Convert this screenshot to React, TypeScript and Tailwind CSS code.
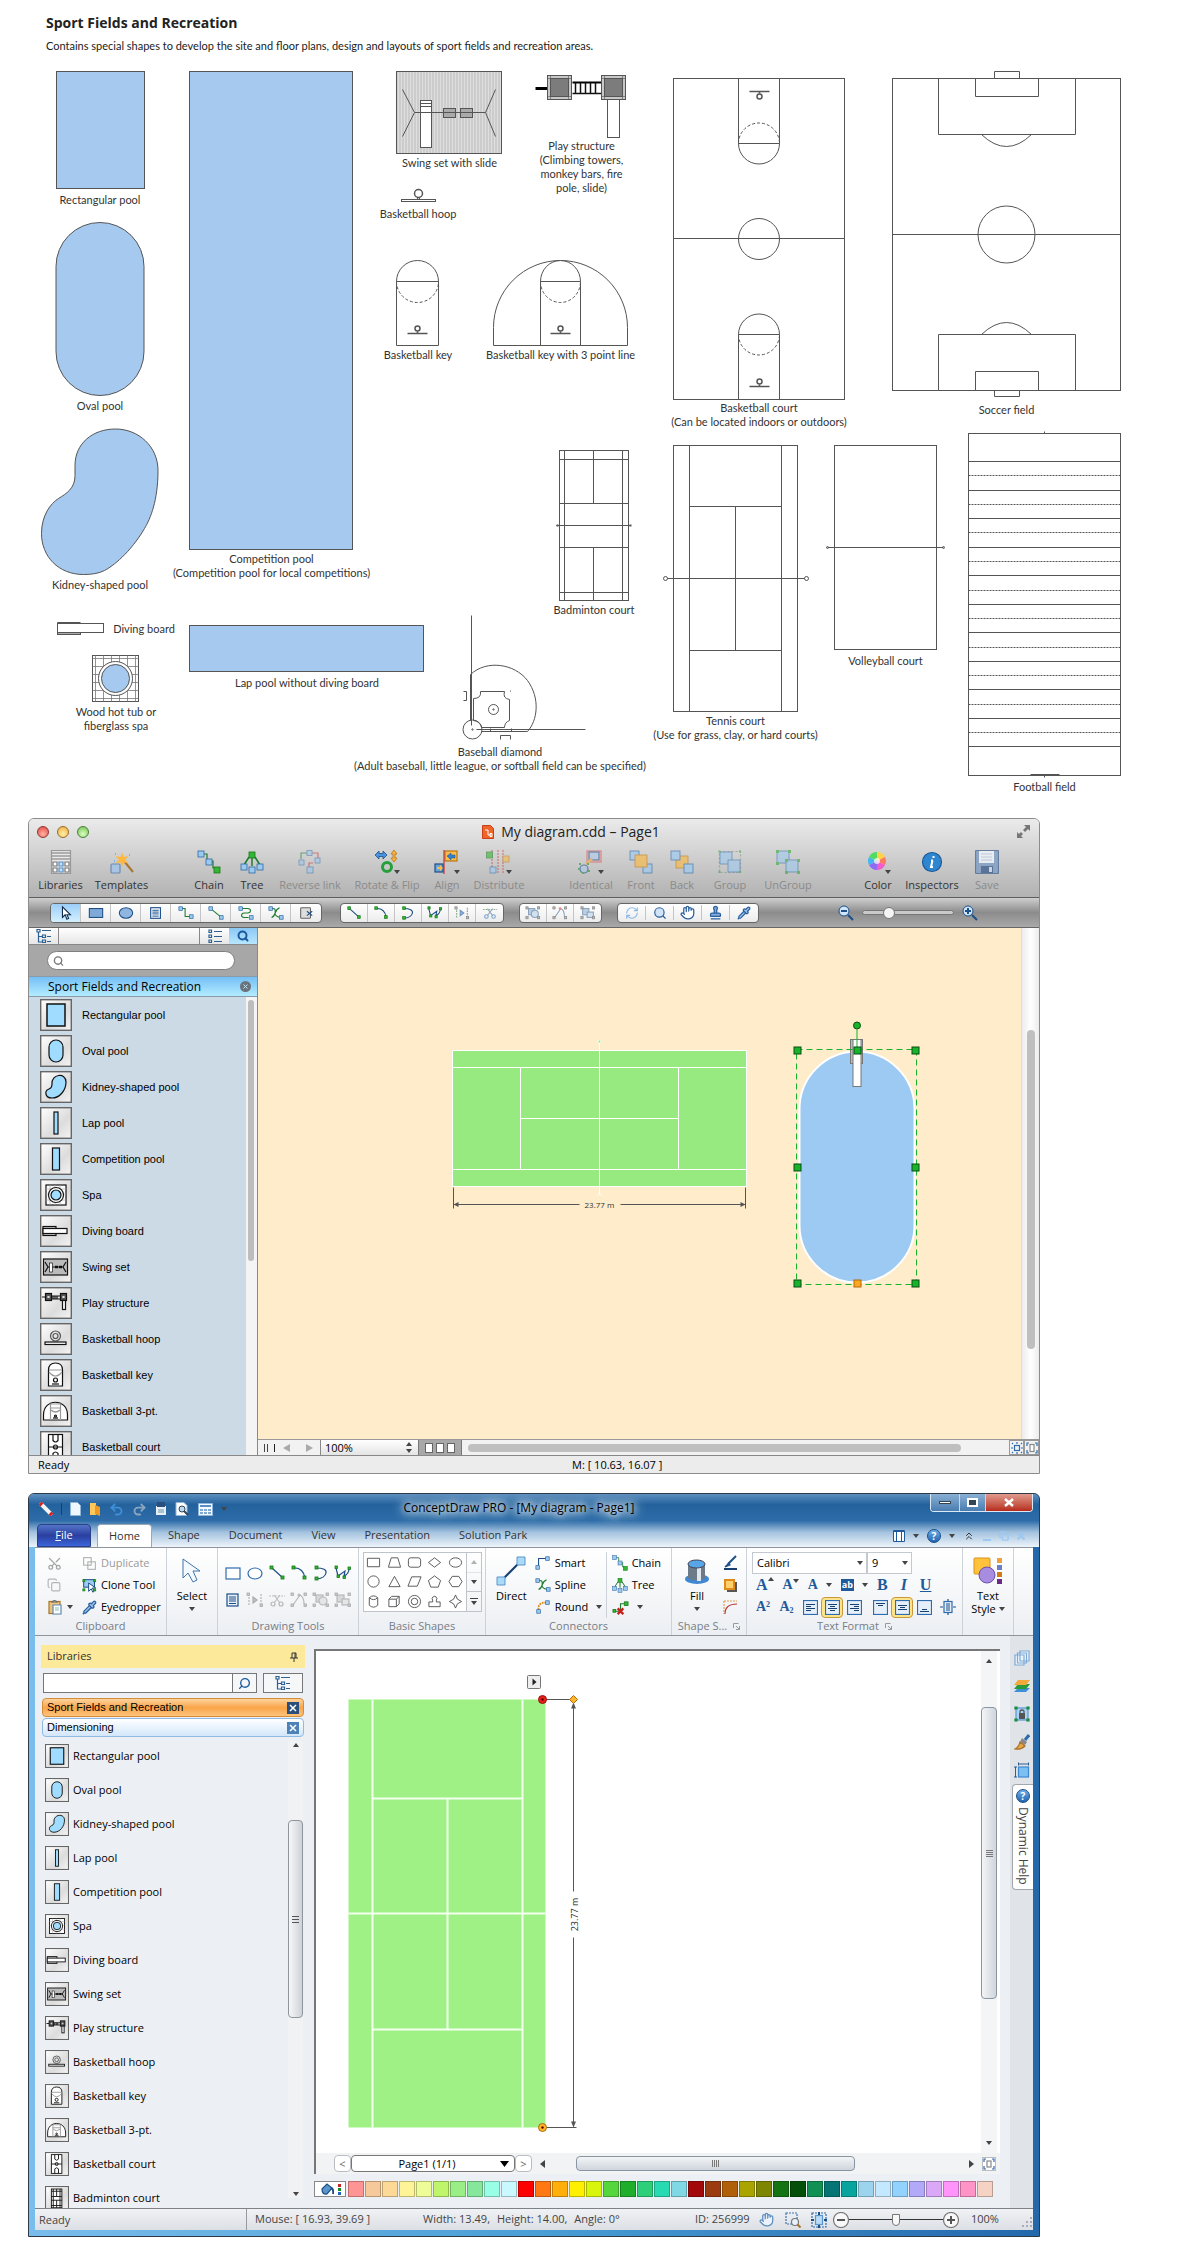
import { useState } from "react";
import type { ReactNode } from "react";
import {
  ChevronsUp,
  Copy,
  Hand,
  Pipette,
  Redo2,
  RefreshCw,
  Scissors,
  Search,
  Stamp,
  Undo2,
} from "lucide-react";

const POOL = "#a6c9ef";
const INK = "#555555";

/* ---------- shape sheet ---------- */

type DrawingProps = { x: number; y: number; w: number; h: number; children: ReactNode };

// Every drawing keeps the sheet's coordinates; half a pixel keeps the lines sharp.
function Drawing({ x, y, w, h, children }: DrawingProps) {
  return (
    <svg
      width={w}
      height={h}
      viewBox={`${x - 0.5} ${y - 0.5} ${w} ${h}`}
      fill="none"
      stroke={INK}
      className="block shrink-0 overflow-visible"
      aria-hidden="true"
    >
      {children}
    </svg>
  );
}

// The caption may be wider than its drawing, so it takes no width of its own.
function Figure({ caption, className, ...drawing }: DrawingProps & { caption: string[]; className?: string }) {
  return (
    <figure className={`flex flex-col items-center ${className ?? ""}`}>
      <Drawing {...drawing} />
      <figcaption className="flex w-0 flex-col items-center text-[11px] leading-[14px] whitespace-nowrap text-[#333]">
        {caption.map((line) => (
          <span key={line}>{line}</span>
        ))}
      </figcaption>
    </figure>
  );
}

function Hoop({ x, y, flip }: { x: number; y: number; flip?: boolean }) {
  const d = flip ? -1 : 1;
  return (
    <g>
      <circle cx={x} cy={y - 5 * d} r="2.5" strokeWidth="1.5" />
      <path d={`M${x} ${y - 2 * d}V${y}M${x - 10} ${y}h20`} strokeWidth="1.5" />
    </g>
  );
}

function Tower({ x }: { x: number }) {
  return (
    <g>
      <rect x={x} y="75" width="24" height="24" fill="#c8c8c8" />
      <rect x={x + 3} y="78" width="18" height="18" fill="#7c7c7c" />
      <path d={`M${x + 3} 75v24M${x + 21} 75v24M${x} 78h24M${x} 96h24`} strokeWidth="0.6" />
    </g>
  );
}

const solidYards = [461, 490, 518, 547, 575, 604, 632, 661, 689, 718, 746];
const dashedYards = [475, 504, 532, 561, 590, 618, 647, 675, 704, 732];

function ShapeSheet() {
  return (
    <section className="font-['Lato','Open_Sans',sans-serif]">
      <header className="pt-3 pl-4">
        <h1 className="font-['Open_Sans',sans-serif] text-sm leading-[22px] font-bold text-[#222]">Sport Fields and Recreation</h1>
        <p className="text-[11px] leading-6 text-[#222]">
          Contains special shapes to develop the site and floor plans, design and layouts of sport fields and recreation areas.
        </p>
      </header>

      <div className="mt-[13px] flex items-start">
        <div className="flex w-[140px] shrink-0 flex-col items-center">
          <Figure caption={["Rectangular pool"]} x={54} y={71} w={91} h={122}>
            <rect x="55" y="71" width="88" height="117" fill={POOL} />
          </Figure>
          <Figure className="mt-[15px]" caption={["Oval pool"]} x={54} y={222} w={91} h={177}>
            <rect x="54.5" y="222" width="88" height="173" rx="44" fill={POOL} />
          </Figure>
          <Figure className="mt-[15px]" caption={["Kidney-shaped pool"]} x={41} y={428} w={118} h={150}>
            <path
              d="M74.5 465C74.5 443 92 428.5 115 428.5C138 428.5 157.5 446 157.5 470C157.5 500 150 518 144 528C130 552 112 566 104 570C98 573 91 574 83 574C58 574 41 556 41 533C41 515 50 503 58 498C66 493 74.5 488 74.5 475Z"
              fill={POOL}
            />
          </Figure>
          <div className="flex flex-col items-center gap-[19px] pt-[29px] pl-8">
            <figure className="flex items-center gap-2">
              <Drawing x={57} y={621} w={48} h={15}>
                <path d="M57 622h23M57 622v12h23" />
                <rect x="57" y="632" width="23" height="2" fill="#aaa" />
                <rect x="57" y="623" width="46" height="9" fill="#fff" />
              </Drawing>
              <figcaption className="text-[11px] leading-[14px] whitespace-nowrap text-[#333]">Diving board</figcaption>
            </figure>
            <Figure caption={["Wood hot tub or", "fiberglass spa"]} x={94} y={655} w={48} h={50}>
              <rect x="94" y="655" width="46" height="46" />
              <path
                d="M97 655v46M105 655v46M113 655v46M121 655v46M129 655v46M137 655v46M94 658h46M94 666h46M94 674h46M94 682h46M94 690h46M94 698h46"
                stroke="#777"
                strokeWidth="0.8"
              />
              <circle cx="117" cy="678" r="17" fill="#fff" />
              <circle cx="117" cy="678" r="14" fill={POOL} />
            </Figure>
          </div>
        </div>

        <div className="ml-[19px] shrink-0">
          <div className="flex gap-[42px]">
            <Figure caption={["Competition pool", "(Competition pool for local competitions)"]} x={189} y={71} w={165} h={481}>
              <rect x="189" y="71" width="163" height="478" fill={POOL} />
            </Figure>
            <div className="flex w-[234px] flex-col">
              <div className="flex items-start gap-8">
                <div className="flex flex-col items-start">
                  <Figure caption={["Swing set with slide"]} x={396} y={71} w={107} h={85}>
                    <defs>
                      <pattern id="sand" width="3" height="2" patternUnits="userSpaceOnUse">
                        <path d="M0 0.5h1M1.5 1.5h1" stroke="#777" />
                      </pattern>
                    </defs>
                    <rect x="396" y="71" width="105" height="82" fill="url(#sand)" />
                    <path d="M402 89L414 112L402 136M495 89L485 112L495 136" />
                    <rect x="420" y="100" width="11" height="47" fill="#fff" />
                    <path d="M420 103h11M420 106h11" />
                    <rect x="443" y="108" width="12" height="9" fill="#aaa" />
                    <rect x="460" y="108" width="12" height="9" fill="#aaa" />
                    <path d="M414 112h71" />
                  </Figure>
                  <Figure className="mt-[17px] ml-1" caption={["Basketball hoop"]} x={399} y={187} w={36} h={20}>
                    <circle cx="417" cy="193" r="4" strokeWidth="1.5" />
                    <path d="M416 197v2M418 197v2" />
                    <rect x="400" y="199" width="34" height="2" />
                  </Figure>
                </div>
                <Figure
                  caption={["Play structure", "(Climbing towers,", "monkey bars, fire", "pole, slide)"]}
                  x={535}
                  y={71}
                  w={93}
                  h={68}
                >
                  <path d="M535 88h12" stroke="#000" strokeWidth="3" />
                  <path d="M572 82h29" stroke="#000" strokeWidth="2" />
                  <path d="M572 93h29M575 82v11M580 82v11M585 82v11M590 82v11M595 82v11" stroke="#111" strokeWidth="1.5" />
                  <rect x="607" y="99" width="12" height="38" />
                  <Tower x={547} />
                  <Tower x={601} />
                </Figure>
              </div>
              <div className="mt-[39px] flex gap-[52px]">
                <Figure caption={["Basketball key"]} x={396} y={260} w={44} h={88}>
                  <path d="M396 345V281A21 21 0 0 1 438 281V345ZM396 281h42" />
                  <path d="M396 281A21 21 0 0 0 438 281" strokeDasharray="3 2" />
                  <Hoop x={417} y={333} />
                </Figure>
                <Figure caption={["Basketball key with 3 point line"]} x={492} y={260} w={137} h={88}>
                  <path d="M493 345V327A67 67 0 0 1 627 327V345Z" />
                  <path d="M540 345V281A20 21 0 0 1 580 281V345M540 281h40" />
                  <path d="M540 281A20 21 0 0 0 580 281" strokeDasharray="3 2" />
                  <Hoop x={560} y={333} />
                </Figure>
              </div>
              <Figure className="mt-[88px] self-end" caption={["Badminton court"]} x={558} y={450} w={72} h={153}>
                <rect x="559" y="450" width="69" height="150" />
                <path d="M564 450v150M622 450v150M559 459h69M559 503h69M556 525h74M559 547h69M559 592h69M593 450v53M593 547v53" />
                <path d="M557 524v2M630 524v2" strokeWidth="2" />
              </Figure>
            </div>
          </div>
          <div className="flex items-start">
            <Figure className="mt-2" caption={["Lap pool without diving board"]} x={189} y={625} w={236} h={51}>
              <rect x="189" y="625" width="234" height="46" fill={POOL} />
            </Figure>
            <Figure
              caption={["Baseball diamond", "(Adult baseball, little league, or softball field can be specified)"]}
              x={425}
              y={617}
              w={150}
              h={128}
            >
              <path d="M471 615V725M476 729H585M470 720V674C486 659 514 663 527 680C540 698 537 720 527 731H481" />
              <circle cx="472" cy="729" r="9.5" />
              <path d="M480 691H504Q502 698 509 699V720Q504 722 504 727H481Q480 721 473 720V698Q481 698 480 691Z" />
              <circle cx="493" cy="709" r="5" />
              <circle cx="493" cy="709" r="0.7" />
              <circle cx="472" cy="729" r="0.7" />
              <path d="M463 691h3v9h-3M500 739v-4h10v4M510 690v1M511 728v3M490 728v3" />
            </Figure>
          </div>
        </div>

        <div className="ml-[33px] shrink-0">
          <div className="flex items-start gap-[45px] pl-[9px]">
            <Figure caption={["Basketball court", "(Can be located indoors or outdoors)"]} x={672} y={71} w={174} h={330}>
              <rect x="673" y="78" width="171" height="321" />
              <path d="M673 238h171M738 78v65h41v-65M738 143A20.5 20.5 0 0 0 779 143M738 399v-65h41v65M738 334A20.5 20.5 0 0 1 779 334" />
              <path d="M738 143A20.5 20.5 0 0 1 779 143M738 334A20.5 20.5 0 0 0 779 334" strokeDasharray="3 2" />
              <circle cx="758.5" cy="238.5" r="20.5" />
              <Hoop x={759} y={91} flip />
              <Hoop x={759} y={386} />
            </Figure>
            <Figure caption={["Soccer field"]} x={891} y={71} w={231} h={332}>
              <rect x="892" y="78" width="228" height="312" />
              <path d="M892 234h228M938 78v56h137v-56M975 78v18h63v-18M994 78v-7h25v7M938 390v-56h137v56M975 390v-19h63v19M994 390v6h25v-6M981 134Q1006 158 1031 134M981 334Q1006 310 1031 334" />
              <circle cx="1006" cy="234" r="28.5" />
            </Figure>
          </div>
          <div className="mt-[3px] flex items-start">
            <Figure caption={["Tennis court", "(Use for grass, clay, or hard courts)"]} x={663} y={432} w={145} h={282}>
              <rect x="673" y="445" width="124" height="266" />
              <path d="M689 445v266M781 445v266M689 506h92M689 650h92M735 506v144M667 578h137" />
              <circle cx="665" cy="578" r="2" />
              <circle cx="806" cy="578" r="2" />
            </Figure>
            <Figure className="ml-[17px]" caption={["Volleyball court"]} x={825} y={432} w={121} h={222}>
              <rect x="834" y="445" width="102" height="204" />
              <path d="M827 547h116" />
              <circle cx="827" cy="547" r="1" />
              <circle cx="943" cy="547" r="1" />
            </Figure>
            <Figure className="ml-[21px]" caption={["Football field"]} x={967} y={432} w={155} h={348}>
              <rect x="968" y="433" width="152" height="342" />
              {solidYards.map((y) => (
                <path key={y} d={`M968 ${y}h152`} />
              ))}
              {dashedYards.map((y) => (
                <path key={y} d={`M968 ${y}h152`} strokeDasharray="2 1" />
              ))}
              <path d="M1030 774h29M1044 774v3M1044 431v2" />
            </Figure>
          </div>
        </div>
      </div>
    </section>
  );
}

/* ---------- library thumbnails, shared by both windows ---------- */

const thumbs: Record<string, ReactNode> = {
  "Rectangular pool": <rect x="7" y="5" width="18" height="22" fill="#9fdcff" strokeWidth="1.5" />,
  "Oval pool": <rect x="9" y="5" width="14" height="22" rx="7" fill="#9fdcff" />,
  "Kidney-shaped pool": (
    <path d="M12 13C11 3 26 1 26 11C26 19 20 27 12 27C5 27 4 20 9 18C12 17 12 15 12 13Z" fill="#9fdcff" />
  ),
  "Lap pool": <rect x="14" y="5" width="4" height="22" fill="#9fdcff" />,
  "Competition pool": <rect x="12.5" y="5" width="7" height="22" fill="#9fdcff" />,
  Spa: (
    <>
      <rect x="6" y="6" width="20" height="20" fill="#fff" />
      <path d="M10 6v20M15 6v20M20 6v20M6 10h20M6 15h20M6 21h20" stroke="#aaa" strokeWidth="0.7" />
      <circle cx="16" cy="16" r="7.5" fill="#fff" />
      <circle cx="16" cy="16" r="5" fill="#9fdcff" />
    </>
  ),
  "Diving board": (
    <>
      <rect x="3" y="11.5" width="13" height="9" fill="#ccc" />
      <rect x="3" y="13.5" width="24" height="5" fill="#fff" />
    </>
  ),
  "Swing set": (
    <>
      <rect x="3.5" y="8" width="24" height="16" fill="#bbb" />
      <path d="M5 11l3 5l-3 5M26 11l-3 5l3 5M8 16h15" />
      <path d="M15 16h3M19 16h3" strokeWidth="2.5" />
      <rect x="9.5" y="12" width="3" height="9" fill="#fff" strokeWidth="0.7" />
    </>
  ),
  "Play structure": (
    <>
      <path d="M2 10h4M11 9h9M11 12h9M13 9v3M15 9v3M17 9v3" />
      <rect x="5.5" y="6.5" width="6" height="7" fill="#555" />
      <rect x="20.5" y="6.5" width="6" height="7" fill="#555" />
      <rect x="22.5" y="13.5" width="3" height="9" fill="#fff" />
      <path d="M8 9.5h1v1h-1zM23 9.5h1v1h-1z" stroke="#ddd" />
    </>
  ),
  "Basketball hoop": (
    <>
      <circle cx="15.5" cy="13" r="5" stroke="#555" />
      <circle cx="15.5" cy="13" r="2.5" stroke="#555" />
      <rect x="5" y="19" width="21" height="2.5" fill="#fff" />
    </>
  ),
  "Basketball key": (
    <>
      <path d="M8.5 27V11Q8.5 4 15.5 4Q22.5 4 22.5 11V27Z" fill="#fff" />
      <path d="M9 11h13M9 13q6.5 8 13 0" stroke="#999" />
      <circle cx="15.5" cy="21" r="2" />
      <path d="M12 25h7" />
    </>
  ),
  "Basketball 3-pt.": (
    <>
      <path d="M3.5 25V20C3.5 3 27.5 3 27.5 20V25Z" fill="#fff" />
      <path d="M10.5 25V9h10v16M10.5 13h10M11 15q4.500 4 9 0" stroke="#999" />
      <path d="M13 23h5" />
      <circle cx="15.5" cy="21" r="1" />
    </>
  ),
  "Basketball court": (
    <>
      <rect x="8.5" y="3.5" width="14" height="25" fill="#fff" />
      <path d="M8.500 16h14M13 3.500v6q2.500 3 5 0v-6M13 28.500v-6q2.500-3 5 0v6" />
      <circle cx="15.5" cy="16" r="2" />
    </>
  ),
  "Badminton court": (
    <>
      <rect x="8.5" y="4" width="14" height="25" fill="#fff" />
      <path d="M11 4v25M20 4v25M8.500 7h14M8.500 14h14M8.500 19h14M8.500 26h14M15.500 4v10M15.500 19v10" />
    </>
  ),
};

const libraryItems = Object.keys(thumbs);

function Thumb({ name, size }: { name: string; size: number }) {
  return (
    <svg width={size} height={size} viewBox="0 0 32 32" fill="none" stroke="#111" strokeWidth="1.2" className="shrink-0" aria-hidden="true">
      <defs>
        <linearGradient id="plate" x1="0" y1="0" x2="1" y2="1">
          <stop offset="0" stopColor="#fff" />
          <stop offset="0.6" stopColor="#dcdcdc" />
          <stop offset="1" stopColor="#f4f4f4" />
        </linearGradient>
      </defs>
      <rect x="0.7" y="0.7" width="30.6" height="30.6" fill="url(#plate)" stroke="#666" strokeWidth="1.4" />
      <g>{thumbs[name]}</g>
    </svg>
  );
}

/* ---------- glyphs ---------- */

function Node({ x, y, s = 4, c = "blue" }: { x: number; y: number; s?: number; c?: string }) {
  const fill = c === "green" ? "#35b535" : c === "gray" ? "#bbb" : c === "orange" ? "#f5b94e" : "#9cc9ef";
  const line = c === "green" ? "#157a15" : c === "gray" ? "#8a8a8a" : c === "orange" ? "#c07c1a" : "#2f69a5";
  return <rect x={x} y={y} width={s} height={s} fill={fill} stroke={line} strokeWidth="0.8" />;
}

function Glyph({ size = 18, box = 18, children }: { size?: number; box?: number; children: ReactNode }) {
  return (
    <svg width={size} height={size} viewBox={`0 0 ${box} ${box}`} fill="none" stroke="#1d4f87" strokeWidth="1.2" className="shrink-0" aria-hidden="true">
      {children}
    </svg>
  );
}

const corners = (c: string) => (
  <>
    <Node x={1} y={2} s={2.5} c={c} />
    <Node x={14} y={2} s={2.5} c={c} />
    <Node x={1} y={13} s={2.5} c={c} />
    <Node x={14} y={13} s={2.5} c={c} />
  </>
);

const tools: Record<string, ReactNode> = {
  Select: <path d="M5 2v12l3-3l2 5l2-1l-2-4h4z" fill="#fff" stroke="#0f2a4a" />,
  Rectangle: <rect x="1.5" y="4" width="15" height="10" fill="#7fa9d8" />,
  Ellipse: <ellipse cx="9" cy="9" rx="7.5" ry="6" fill="#8fb5e0" />,
  "Text box": (
    <>
      <rect x="3" y="3" width="11" height="12" fill="#e8f1fa" />
      <path d="M5 6h7M5 8h7M5 10h7M5 12.500h7" strokeWidth="1" />
    </>
  ),
  "Smart connector": (
    <>
      <path d="M4 4h4v9h5" stroke="#1c7c2c" />
      <Node x={1} y={2} />
      <Node x={13} y={11} />
    </>
  ),
  "Direct connector": (
    <>
      <path d="M4 5l10 8" stroke="#1c7c2c" />
      <Node x={1} y={2} />
      <Node x={13} y={12} />
    </>
  ),
  "Round connector": (
    <>
      <path d="M4 4h7q3 0 3 2.500t-3 2.500h-4q-3 0-3 2.500t3 2.500h5" stroke="#1c7c2c" />
      <Node x={1} y={2} />
      <Node x={13} y={12} />
    </>
  ),
  "Spline connector": (
    <>
      <path d="M4 4q5-1 4 4t6 6M4 14q3-1 4-5t5-6" stroke="#1c7c2c" />
      <Node x={1} y={2} />
      <Node x={13} y={12} />
    </>
  ),
  "Delete connector": (
    <>
      <rect x="3" y="3" width="11" height="12" rx="1" fill="#ddd" stroke="#666" />
      <path d="M10 7l6 5M16 7l-6 5" />
    </>
  ),
  Line: (
    <>
      <path d="M4 4l11 10" />
      <Node x={2} y={2} s={3} c="green" />
      <Node x={13} y={12} s={3} c="green" />
    </>
  ),
  Arc: (
    <>
      <path d="M3 4q10-1 12 10" />
      <Node x={2} y={2} s={3} c="green" />
      <Node x={13} y={12} s={3} c="green" />
    </>
  ),
  Curve: (
    <>
      <path d="M4 4q11 0 10 5t-9 6" />
      <Node x={3} y={2} s={3} c="green" />
      <Node x={3} y={13} s={3} c="green" />
    </>
  ),
  Spline: (
    <>
      <path d="M2 4l2 8l7-5l-1 5q5-2 5-8" />
      <Node x={1} y={2} s={2.5} c="green" />
      <Node x={3} y={11} s={2.5} c="green" />
      <Node x={9} y={12} s={2.5} c="green" />
      <Node x={14} y={3} s={2.5} c="green" />
    </>
  ),
  Mirror: (
    <>
      <path d="M3 3v12M15 3v12" stroke="#7da77d" strokeDasharray="2 1" />
      <path d="M7 6v6l4-3z" fill="#8fb5e0" stroke="#6c93bd" />
      <Node x={1} y={2} s={2.5} c="gray" />
      <Node x={14} y={13} s={2.5} c="gray" />
    </>
  ),
  Cut: (
    <>
      <path d="M1 5h16" stroke="#8ab58a" strokeDasharray="2 1" />
      <path d="M6 4l6 8M12 4l-6 8" stroke="#9ab" />
      <circle cx="5" cy="13" r="2" stroke="#7ba3cb" />
      <circle cx="13" cy="13" r="2" stroke="#7ba3cb" />
    </>
  ),
  "Edit points": (
    <>
      <rect x="4" y="4" width="7" height="7" fill="#bcd0e4" stroke="#8aa3bd" />
      <circle cx="11" cy="10" r="4" fill="#d3e1ee" stroke="#8aa3bd" />
      {corners("gray")}
    </>
  ),
  "Edit curve": (
    <>
      <path d="M3 14l7-10q4 2 4 9" stroke="#8aa3bd" />
      <circle cx="9" cy="4" r="1.5" fill="#e88" stroke="none" />
      {corners("gray")}
    </>
  ),
  "Edit group": (
    <>
      <rect x="3" y="4" width="7" height="7" fill="#bcd0e4" stroke="#8aa3bd" />
      <rect x="8" y="8" width="7" height="6" fill="#d3e1ee" stroke="#8aa3bd" />
      {corners("gray")}
    </>
  ),
};

function Tool({ name, size }: { name: string; size?: number }) {
  return <Glyph size={size}>{tools[name]}</Glyph>;
}

function TreeGlyph({ flat }: { flat?: boolean }) {
  return (
    <Glyph size={16} box={16}>
      {flat ? (
        <path d="M2 2h2.500v2.500h-2.500zM2 7h2.500v2.500h-2.500zM2 12h2.500v2.500h-2.500zM7 3.500h8M7 8.500h8M7 13.500h8" stroke="#2d6090" />
      ) : (
        <path d="M1 1.500h3v2.500h-3zM2.500 4v10h4M2.500 8.500h4M6.500 7h3v2.500h-3zM6.500 12h3v2.500h-3zM6 2.500h9M11 8.500h4M11 13.500h4" stroke="#2d6090" />
      )}
    </Glyph>
  );
}

function Caret({ up, className }: { up?: boolean; className?: string }) {
  return (
    <svg width="6" height="4" viewBox="0 0 6 4" className={`shrink-0 ${className ?? ""}`} aria-hidden="true">
      <path d={up ? "M0 4L3 0L6 4Z" : "M0 0H6L3 4Z"} fill="#444" />
    </svg>
  );
}

/* ---------- Mac window ---------- */

const macIcons: Record<string, ReactNode> = {
  Libraries: (
    <>
      <rect x="2.5" y="0.5" width="19" height="23" fill="#e9e9e9" stroke="#999" />
      <path d="M3 3h18M3 6h18M3 9h18" stroke="#777" />
      <path d="M4 12h4v4h-4zM4 18h4v4h-4zM16 12h4v4h-4zM16 18h4v4h-4z" fill="#fff" stroke="#777" />
      <path d="M10 12h4v4h-4zM10 18h4v4h-4z" fill="#bfe0ff" stroke="#5c8dc0" />
    </>
  ),
  Templates: (
    <>
      <rect x="1" y="14" width="9" height="9" rx="1" fill="#a9c3e2" stroke="#6d8cb0" />
      <path d="M14 11l9 11" stroke="#a9762e" strokeWidth="2" />
      <path d="M12 2l1.500 5l5-1l-3.500 4l3.500 3l-5-0.500l-1.500 4.500l-1.500-4.500l-5 0.500l3.500-3l-3.500-4l5 1z" fill="#ffb83f" stroke="none" />
      <path d="M5 4h1M19 5h1M4 11h1" stroke="#7db4ea" strokeWidth="2" />
    </>
  ),
  Chain: (
    <>
      <path d="M6 4h4v7h6v7h3" stroke="#1c7c2c" />
      <Node x={1} y={1} s={6} />
      <Node x={9} y={9} s={6} />
      <Node x={17} y={17} s={6} c="green" />
    </>
  ),
  Tree: (
    <>
      <path d="M12 8v8M9 7l-5 8M15 7l5 8" stroke="#1c7c2c" strokeWidth="1.5" />
      <Node x={9} y={2} s={6} c="green" />
      <Node x={1} y={14} s={6} />
      <Node x={9} y={17} s={6} />
      <Node x={17} y={14} s={6} />
    </>
  ),
  "Reverse link": (
    <g opacity="0.55">
      <path d="M3 9V3h6" stroke="#1c7c2c" />
      <path d="M14 3h6v7M15 13h-4v5" stroke="#c33" />
      <Node x={9} y={0.5} s={5} />
      <Node x={17} y={8} s={5} />
      <Node x={1} y={10} s={5} />
      <Node x={9} y={17} s={6} />
    </g>
  ),
  "Rotate & Flip": (
    <>
      <path d="M1 5l4-4v2.500h4v-2.500l4 4l-4 4v-2.500h-4v2.500z" fill="#4a93dd" strokeWidth="0.8" />
      <path d="M20 0l3 4h-2v4h2l-3 4l-3-4h2v-4h-2z" fill="#f8b53a" stroke="#b97613" strokeWidth="0.8" />
      <circle cx="13" cy="17" r="4.5" stroke="#25a03a" strokeWidth="3" />
    </>
  ),
  Align: (
    <>
      <rect x="11" y="1" width="12" height="10" fill="#f9bd49" stroke="#b97613" />
      <path d="M13 6l4-3v2h4v3h-4v2z" fill="#3480d0" strokeWidth="0.5" />
      <path d="M10 0v24" stroke="#c33" />
      <rect x="1" y="14" width="8" height="8" fill="#6ca4e0" />
      <path d="M9 18l-3-3v2h-3v2h3v2z" fill="#f9bd49" stroke="none" />
    </>
  ),
  Distribute: (
    <g opacity="0.6">
      <path d="M6 0v24M12 0v24M17 0v24" stroke="#c44" strokeDasharray="2 1" />
      <Node x={0.5} y={2} s={6} c="green" />
      <Node x={17} y={6} s={6} c="orange" />
      <Node x={4} y={17} s={6} />
    </g>
  ),
  Identical: (
    <g opacity="0.6">
      <rect x="9" y="1" width="14" height="11" stroke="#d55" fill="#fbb" />
      <rect x="11" y="2" width="10" height="8" fill="#a9c8ea" />
      <path d="M8 14l6-5" stroke="#eba04a" strokeWidth="3" />
      <circle cx="6" cy="19" r="4" fill="#a9c8ea" />
      <path d="M1 14h10v9h-10z" stroke="#2a9a2a" strokeDasharray="2 6" strokeWidth="2" />
    </g>
  ),
  Front: (
    <g opacity="0.7">
      <Node x={1} y={1} s={9} />
      <Node x={14} y={14} s={9} />
      <Node x={6} y={5} s={12} c="orange" />
    </g>
  ),
  Back: (
    <g opacity="0.7">
      <Node x={6} y={6} s={12} c="orange" />
      <Node x={1} y={1} s={9} />
      <Node x={14} y={14} s={9} />
    </g>
  ),
  Group: (
    <g opacity="0.6">
      <rect x="1.5" y="1.5" width="21" height="21" stroke="#888" strokeDasharray="2 2" />
      <Node x={2} y={2} s={12} />
      <Node x={10} y={10} s={12} />
      <path d="M0.500 0.500h2v2h-2zM21 0.500h2v2h-2zM0.500 21h2v2h-2zM21 21h2v2h-2z" fill="#3a3" stroke="none" />
    </g>
  ),
  UnGroup: (
    <g opacity="0.6">
      <Node x={1} y={1} s={12} />
      <Node x={10} y={10} s={12} />
      <path d="M0 0h3v3h-3zM12 0h3v3h-3zM0 12h3v3h-3zM9 9h3v3h-3zM21 9h3v3h-3zM9 21h3v3h-3zM21 21h3v3h-3z" fill="#3a3" stroke="none" />
    </g>
  ),
  Color: (
    <g stroke="none">
      <path d="M12 11L12 2A9 9 0 0 1 20 7Z" fill="#ffd24a" />
      <path d="M12 11L20 7A9 9 0 0 1 20 15Z" fill="#ff7a5c" />
      <path d="M12 11L20 15A9 9 0 0 1 12 20Z" fill="#f35bd0" />
      <path d="M12 11L12 20A9 9 0 0 1 4 15Z" fill="#8e6bf2" />
      <path d="M12 11L4 15A9 9 0 0 1 4 7Z" fill="#45b6ee" />
      <path d="M12 11L4 7A9 9 0 0 1 12 2Z" fill="#4fdc62" />
      <circle cx="12" cy="11" r="3" fill="#fff" opacity="0.7" />
    </g>
  ),
  Inspectors: (
    <>
      <circle cx="12" cy="12" r="9.5" fill="#2f86d0" stroke="#1a5a9a" />
      <path d="M13.500 6v2M12.500 10.500l-1.500 6.500h2M11 10.500h2" stroke="#fff" strokeWidth="2" />
    </>
  ),
  Save: (
    <g opacity="0.8">
      <rect x="0.5" y="0.5" width="23" height="23" rx="1" fill="#7e9dc4" stroke="#4d6a92" />
      <rect x="4" y="1" width="15" height="12" fill="#eef4fb" stroke="none" />
      <path d="M6 4h11M6 7h11M6 10h11" stroke="#b7c8dc" />
      <rect x="6" y="16" width="12" height="7" fill="#3f5f8e" stroke="none" />
      <rect x="14" y="17" width="3" height="5" fill="#cdd9e8" stroke="none" />
    </g>
  ),
};

const macToolbar = [
  [
    { label: "Libraries", width: "w-[57px]" },
    { label: "Templates", width: "w-[65px]" },
  ],
  [
    { label: "Chain", width: "w-11" },
    { label: "Tree", width: "w-[42px]" },
    { label: "Reverse link", width: "w-[74px]", off: true },
    { label: "Rotate & Flip", width: "w-20", off: true, menu: true },
    { label: "Align", width: "w-10", off: true, menu: true },
    { label: "Distribute", width: "w-16", off: true, menu: true },
  ],
  [
    { label: "Identical", width: "w-[54px]", off: true, menu: true },
    { label: "Front", width: "w-[46px]", off: true },
    { label: "Back", width: "w-9", off: true },
    { label: "Group", width: "w-[60px]", off: true },
    { label: "UnGroup", width: "w-14", off: true },
  ],
  [
    { label: "Color", width: "w-[42px]", menu: true },
    { label: "Inspectors", width: "w-[66px]" },
    { label: "Save", width: "w-11", off: true },
  ],
];

const drawConnect = [
  "Select",
  "Rectangle",
  "Ellipse",
  "Text box",
  "Smart connector",
  "Direct connector",
  "Round connector",
  "Spline connector",
  "Delete connector",
];
const drawLines = ["Line", "Arc", "Curve", "Spline", "Mirror", "Cut"];
const drawEdits = ["Edit points", "Edit curve", "Edit group"];

function ToolPill({ names, cell }: { names: string[]; cell: string }) {
  return (
    <div className="flex h-5 shrink-0 items-center overflow-hidden rounded border border-[#666] bg-gradient-to-b from-white to-[#ececec]">
      {names.map((name) => (
        <button
          key={name}
          aria-label={name}
          className={`flex h-full items-center justify-center border-r border-[#c4c4c4] last:border-r-0 ${cell} ${name === "Select" ? "bg-gradient-to-b from-[#9ccdf8] to-[#d4f1ff]" : ""}`}
        >
          <Tool name={name} size={16} />
        </button>
      ))}
    </div>
  );
}

function Handle({ x, y, c = "#17b32a" }: { x: number; y: number; c?: string }) {
  return <rect x={x - 3.5} y={y - 3.5} width="7" height="7" fill={c} stroke={c === "#17b32a" ? "#0b4d12" : "#b06a0e"} />;
}

function MacCanvas() {
  return (
    <svg width="763" height="512" viewBox="257.5 927.5 763 512" fill="none" className="block shrink-0" aria-label="Drawing page">
      <rect x="452" y="1050" width="294" height="136" fill="#97ea80" stroke="#fff" />
      <path d="M452 1067h294M452 1169h294M520 1067v102M678 1067v102M520 1118h158M599 1042v152" stroke="#fff" />
      <circle cx="599" cy="1041" r="1.5" fill="#97ea80" stroke="#fff" />
      <path d="M597 1195l2-2l2 2" stroke="#fff" />
      <path d="M453 1187v21M745 1187v21M453 1204h126M620 1204h125" stroke="#555" />
      <path d="M453 1204l5-2.500v5zM745 1204l-5-2.500v5z" fill="#555" />
      <text x="599" y="1207" textAnchor="middle" fill="#333" className="font-['Open_Sans',sans-serif] text-[8px]">
        23.77 m
      </text>
      <rect x="799" y="1051" width="115" height="231" rx="57.5" fill="#9ccaf2" stroke="#fff" strokeWidth="2" />
      <rect x="850" y="1039" width="12" height="24" fill="#bbb" stroke="#777" />
      <rect x="852.5" y="1039" width="8" height="47" fill="#fff" stroke="#777" />
      <rect x="796" y="1049" width="120" height="235" stroke="#17b32a" strokeDasharray="6 4" />
      <path d="M856.500 1029v18" stroke="#17b32a" />
      <circle cx="856.5" cy="1025" r="3.5" fill="#17b32a" stroke="#0b4d12" />
      {[1050, 1167, 1283].map((y) => (
        <g key={y}>
          <Handle x={797} y={y} />
          <Handle x={915} y={y} />
        </g>
      ))}
      <Handle x={857} y={1050} />
      <Handle x={857} y={1283} c="#ffa51f" />
    </svg>
  );
}

function MacWindow() {
  const [zoom, setZoom] = useState(25);

  return (
    <section className="mt-6 flex h-[656px] w-full max-w-[1012px] flex-col overflow-hidden rounded-t-md border border-[#8c8c8c] bg-[#ececec] font-['Open_Sans',sans-serif] text-black">
      <header className="flex h-[79px] shrink-0 flex-col border-b border-[#5e5e5e] bg-gradient-to-b from-[#ebebeb] to-[#b2b2b2]">
        <div className="flex h-[25px] items-center px-2">
          <div className="flex w-20 gap-2">
            <button aria-label="Close" className="size-3 rounded-full border border-[#8f3631] bg-[radial-gradient(circle_at_50%_70%,#ffb3a5,#e0433a)]" />
            <button aria-label="Minimize" className="size-3 rounded-full border border-[#9a6a25] bg-[radial-gradient(circle_at_50%_70%,#fff0a8,#f0a93c)]" />
            <button aria-label="Zoom" className="size-3 rounded-full border border-[#4d7d3a] bg-[radial-gradient(circle_at_50%_70%,#dcffc0,#6cc04c)]" />
          </div>
          <h2 className="flex flex-1 items-center justify-center gap-[7px] pl-[90px] text-sm text-[#222]">
            <svg width="12" height="14" viewBox="0 0 12 14" aria-hidden="true">
              <path d="M0.500 0.500h8l3 3v10h-11z" fill="#f0642a" stroke="#c8401a" />
              <path d="M3 5h3v5h3M8 8.500h2v3h-2z" fill="none" stroke="#fff" />
            </svg>
            My diagram.cdd – Page1
          </h2>
          <button aria-label="Full screen" className="flex w-24 justify-end">
            <svg width="15" height="15" viewBox="0 0 15 15" fill="#777" aria-hidden="true">
              <path d="M8 1h6v6l-2-2l-3 3l-2-2l3-3zM7 14h-6v-6l2 2l2-2l2 2l-2 2z" />
            </svg>
          </button>
        </div>
        <div className="flex flex-1 gap-[33px] pt-[6px] pr-[30px] pl-[3px]">
          {macToolbar.map((group) => (
            <div key={group[0].label} className="flex last:ml-auto">
              {group.map((item) => (
                <button key={item.label} className={`flex flex-col items-center ${item.width} ${item.off ? "text-[#8a8a8a]" : "text-[#333]"}`}>
                  <span className="flex items-end">
                    <Glyph size={24} box={24}>{macIcons[item.label]}</Glyph>
                    {item.menu && <Caret className="-ml-1" />}
                  </span>
                  <span className="mt-px text-[11px] leading-5 whitespace-nowrap">{item.label}</span>
                </button>
              ))}
            </div>
          ))}
        </div>
      </header>

      <div className="flex h-[30px] shrink-0 items-center border-b border-[#666] bg-gradient-to-b from-[#cfcfcf] via-[#8c8c8c] to-[#a9a9a9] pr-[61px] pl-[21px]">
        <ToolPill names={drawConnect} cell="w-[30px]" />
        <div className="ml-[18px] flex gap-[15px]">
          <ToolPill names={drawLines} cell="w-[27px]" />
          <ToolPill names={drawEdits} cell="w-[27px]" />
          <div className="flex h-5 items-center overflow-hidden rounded border border-[#666] bg-gradient-to-b from-white to-[#ececec] text-[#2a5f9e]">
            <button aria-label="Refresh" className="flex w-7 justify-center border-r border-[#c4c4c4] text-[#8db9e6]"><RefreshCw size={14} /></button>
            <button aria-label="Zoom tool" className="flex w-7 justify-center border-r border-[#c4c4c4]"><Search size={14} fill="#cfe4f8" /></button>
            <button aria-label="Hand" className="flex w-7 justify-center border-r border-[#c4c4c4]"><Hand size={15} fill="#fff" /></button>
            <button aria-label="Stamp" className="flex w-7 justify-center border-r border-[#c4c4c4]"><Stamp size={15} fill="#7fa9d8" /></button>
            <button aria-label="Eyedropper" className="flex w-7 justify-center"><Pipette size={14} fill="#9cc3ea" /></button>
          </div>
        </div>
        <div className="ml-auto flex items-center gap-2">
          <button aria-label="Zoom out">
            <svg width="16" height="16" viewBox="0 0 16 16" fill="none" stroke="#1d4f87" aria-hidden="true">
              <circle cx="6" cy="6" r="5" fill="#cfe6fb" />
              <path d="M3 6h6M10 10l5 5" strokeWidth="2" />
            </svg>
          </button>
          <input
            type="range"
            aria-label="Zoom"
            value={zoom}
            onChange={(e) => setZoom(Number(e.target.value))}
            className="h-[5px] w-[92px] appearance-none rounded-full border border-[#777] bg-[#c9c9c9] [&::-webkit-slider-thumb]:size-3 [&::-webkit-slider-thumb]:appearance-none [&::-webkit-slider-thumb]:rounded-full [&::-webkit-slider-thumb]:border [&::-webkit-slider-thumb]:border-[#777] [&::-webkit-slider-thumb]:bg-[#f4f4f4]"
          />
          <button aria-label="Zoom in">
            <svg width="16" height="16" viewBox="0 0 16 16" fill="none" stroke="#1d4f87" aria-hidden="true">
              <circle cx="6" cy="6" r="5" fill="#cfe6fb" />
              <path d="M3 6h6M6 3v6M10 10l5 5" strokeWidth="2" />
            </svg>
          </button>
        </div>
      </div>

      <div className="flex min-h-0 flex-1">
        <aside className="flex w-[229px] shrink-0 flex-col border-r border-[#888]">
          <div className="flex h-[17px] shrink-0 border-b border-[#888] bg-gradient-to-b from-white to-[#e6e6e6]">
            <button aria-label="Library tree" className="flex w-[30px] items-center justify-center border-r border-[#888]"><TreeGlyph /></button>
            <span className="flex-1" />
            <button aria-label="List view" className="flex w-[30px] items-center justify-center border-l border-[#888]"><TreeGlyph flat /></button>
            <button aria-label="Search libraries" className="flex w-7 items-center justify-center bg-gradient-to-b from-[#8cc8f5] to-[#b6e6fd] text-[#1d5a9c]">
              <Search size={12} strokeWidth={4} />
            </button>
          </div>
          <div className="flex h-[31px] shrink-0 items-center bg-[#a7a7a7] pr-[22px] pl-[18px]">
            <label className="flex h-[19px] w-full items-center gap-1 rounded-full border border-[#808080] bg-white px-[5px] text-[#777]">
              <Search size={12} strokeWidth={3} />
              <input aria-label="Search" className="w-full text-[11px] outline-none" />
            </label>
          </div>
          <div className="flex h-[21px] shrink-0 items-center justify-between border-y border-[#8b9aa8] bg-gradient-to-b from-[#74bff5] to-[#b3ecff] pr-[6px] pl-[19px]">
            <h3 className="text-xs leading-4">Sport Fields and Recreation</h3>
            <button aria-label="Close library">
              <svg width="11" height="11" viewBox="0 0 11 11" aria-hidden="true">
                <circle cx="5.5" cy="5.5" r="5.5" fill="#6b737b" />
                <path d="M3.500 3.500l4 4M7.500 3.500l-4 4" stroke="#b9e6ff" />
              </svg>
            </button>
          </div>
          <div className="flex min-h-0 flex-1 bg-[#ccdae6]">
            <ul className="flex-1 overflow-hidden pl-[11px] font-['Liberation_Sans',Arial,sans-serif] text-[11px]">
              {libraryItems.slice(0, 13).map((name) => (
                <li key={name}>
                  <button className="flex h-9 w-full items-center gap-[10px] text-left">
                    <Thumb name={name} size={32} />
                    {name}
                  </button>
                </li>
              ))}
            </ul>
            <div className="w-[11px] bg-[#f4f4f4] px-[2px] pt-[3px]">
              <div className="h-[261px] w-[6px] rounded-full bg-[#bdbdbd]" />
            </div>
          </div>
        </aside>

        <div className="flex min-w-0 flex-1 flex-col">
          <div className="flex min-h-0 flex-1">
            <div className="min-w-0 flex-1 overflow-hidden bg-[#feeccb]">
              <MacCanvas />
            </div>
            <div className="flex w-[18px] justify-center border-l border-[#ddd] bg-gradient-to-r from-[#ececec] via-white to-[#ececec] pt-[102px]">
              <div className="h-[319px] w-2 rounded-full bg-[#bfbfbf]" />
            </div>
          </div>
          <div className="flex h-4 shrink-0 items-center border-t border-[#999] bg-[#f2f2f2] text-[11px]">
            <span className="flex w-[17px] justify-center gap-[2px] border-r border-[#222]">
              <i className="h-2 w-px bg-[#444]" />
              <i className="h-2 w-px bg-[#444]" />
            </span>
            <button aria-label="Previous page" className="flex h-full w-[23px] items-center justify-center">
              <svg width="7" height="8" viewBox="0 0 7 8" aria-hidden="true"><path d="M7 0v8L0 4z" fill="#aaa" /></svg>
            </button>
            <button aria-label="Next page" className="flex h-full w-[23px] items-center justify-center border-r border-[#888]">
              <svg width="7" height="8" viewBox="0 0 7 8" aria-hidden="true"><path d="M0 0v8L7 4z" fill="#aaa" /></svg>
            </button>
            <div className="relative h-full w-[97px] bg-gradient-to-b from-white to-[#e4e4e4]">
              <select aria-label="Page zoom" className="h-full w-full appearance-none pl-1 leading-[15px]">
                <option>100%</option>
              </select>
              <span className="pointer-events-none absolute top-[2px] right-[6px] flex flex-col gap-[3px]">
                <Caret up />
                <Caret />
              </span>
            </div>
            <span className="flex h-full w-11 items-center justify-center gap-[3px] border-x border-[#777] bg-[#a8a8a8]">
              <i className="h-[10px] w-2 border border-[#666] bg-white" />
              <i className="h-[10px] w-2 border border-[#666] bg-white" />
              <i className="h-[10px] w-2 border border-[#666] bg-white" />
            </span>
            <div className="flex-1 pr-12 pl-[6px]">
              <div className="h-2 rounded-full bg-[#bfbfbf]" />
            </div>
            <button aria-label="Fit page" className="flex h-full w-[15px] items-center justify-center border border-[#999]">
              <Glyph size={12} box={12}>
                <rect x="3.5" y="3.5" width="5" height="5" stroke="#2f6cae" />
                <path d="M6 0v2M6 10v2M0 6h2M10 6h2M1 1l1 1M11 1l-1 1M1 11l1-1M11 11l-1-1" stroke="#2f6cae" />
              </Glyph>
            </button>
            <button aria-label="Fit width" className="flex h-full w-[15px] items-center justify-center border border-[#999]">
              <Glyph size={12} box={12}>
                <rect x="4" y="2.5" width="4" height="7" fill="#fff" stroke="#888" />
                <path d="M1 4v-3h2M11 4v-3h-2M1 8v3h2M11 8v3h-2" stroke="#2f6cae" />
              </Glyph>
            </button>
          </div>
        </div>
      </div>

      <footer className="flex h-[18px] shrink-0 items-center border-t border-[#888] pl-[9px] text-[11px] leading-4">
        <span className="w-[534px]">Ready</span>
        <span>M: [ 10.63, 16.07 ]</span>
      </footer>
    </section>
  );
}

/* ---------- Windows window ---------- */

function RibbonGroup({ label, width, launcher, children }: { label?: string; width: string; launcher?: boolean; children: ReactNode }) {
  return (
    <div className={`flex shrink-0 flex-col border-r border-[#cdd2d8] ${width}`}>
      <div className="flex h-[70px] justify-center pt-1">{children}</div>
      <div className="flex h-[18px] items-center justify-center gap-[6px] whitespace-nowrap text-[#767d86]">
        {label}
        {launcher && (
          <svg width="7" height="7" viewBox="0 0 7 7" fill="none" stroke="#999" aria-hidden="true">
            <path d="M0.500 5v-4.500h5M3 3l3.500 3.500M6.500 3v3.500h-3.500" />
          </svg>
        )}
      </div>
    </div>
  );
}

function RowButton({ label, icon, caret, off }: { label: string; icon: ReactNode; caret?: boolean; off?: boolean }) {
  return (
    <button className={`flex h-[22px] items-center gap-1 whitespace-nowrap ${off ? "text-[#9a9a9a]" : "text-black"}`}>
      {icon}
      {label}
      {caret && <Caret className="ml-1" />}
    </button>
  );
}

function BigButton({ label, icon, menu = true }: { label: string; icon: ReactNode; menu?: boolean }) {
  return (
    <button className="flex h-[62px] flex-col items-center">
      <span className="flex h-[37px] items-center">{icon}</span>
      <span className="leading-[14px]">{label}</span>
      {menu && <Caret className="mt-1" />}
    </button>
  );
}

const basicShapes = [
  "M1.500 3.500h13v9h-13z",
  "M4.500 3h7l3 10h-13z",
  "M4 3h8q2.500 0 2.500 2.500v5q0 2.500-2.500 2.500h-8q-2.500 0-2.500-2.500v-5q0-2.500 2.500-2.500z",
  "M8 3l6.500 5l-6.500 5l-6.500-5z",
  "M1.500 8a6.500 5 0 1 0 13 0a6.500 5 0 1 0-13 0z",
  "M2 8a6 6 0 1 0 12 0a6 6 0 1 0-12 0z",
  "M8 2.500l6 11h-12z",
  "M5 3h10l-4 10h-10z",
  "M8 2l6.500 5l-2.500 7h-8l-2.500-7z",
  "M4.500 2.500h7l3.500 5.500l-3.500 5.500h-7l-3.500-5.500z",
  "M3.500 4v8q4.500 4 9 0v-8q-4.500-4-9 0q4.500 4 9 0",
  "M2 5.500h8v8h-8zM2 5.500l3-3h8l-3 3M13 2.500v8l-3 3",
  "M1.500 8a6.500 6.500 0 1 0 13 0a6.500 6.500 0 1 0-13 0zM4.500 8a3.500 3.500 0 1 0 7 0a3.500 3.500 0 1 0-7 0z",
  "M2 13.500v-5h4v-2a2.500 2.500 0 1 1 4 0v2h4v5z",
  "M8 1l2 4.500l4.500 2.500l-4.500 2.500l-2 4.500l-2-4.500l-4.500-2.500l4.500-2.500z",
];

const fileTabs = ["Shape", "Document", "View", "Presentation", "Solution Park"];

const palette = [
  "#ff9494", "#f6c99a", "#fdd998", "#fff398", "#effd98", "#bff56a", "#99ef86", "#86e69c", "#98ffe6", "#c9f8ff",
  "#ff0000", "#ff7814", "#ffae0a", "#ffef00", "#d8f50c", "#54d63c", "#1fae2c", "#2dcf7b", "#27dab2", "#80d8e4",
  "#a30808", "#9a3c10", "#b06008", "#aaa400", "#7c8600", "#147414", "#045008", "#109052", "#047474", "#0aa49e",
  "#9cd4ee", "#c4e8ff", "#92d2ff", "#b2aaf8", "#dba8f8", "#ff94fa", "#ff94c8", "#f6d2c4",
];

function AlignGlyph({ lines, selected, name }: { lines: string; selected?: boolean; name: string }) {
  return (
    <button aria-label={name} className={`flex h-[21px] w-[22px] items-center justify-center rounded-sm ${selected ? "border border-[#c69a3c] bg-[#fde48a]" : ""}`}>
      <Glyph size={15} box={15}>
        <rect x="0.5" y="0.5" width="14" height="14" fill="#e4effa" stroke="#2f6cae" />
        <path d={lines} stroke="#173f70" />
      </Glyph>
    </button>
  );
}

function PasteGlyph() {
  return (
    <Glyph size={16} box={16}>
      <rect x="2" y="2.5" width="11" height="12" fill="#edc27b" stroke="#a8742a" />
      <path d="M5 3q2.500-3 5 0z" fill="#ccc" stroke="#666" />
      <path d="M6 6h8v9h-8z" fill="#fff" stroke="#5f88b5" />
      <path d="M8 9h4M8 11h4" stroke="#8bb" />
    </Glyph>
  );
}

function DocCanvas() {
  return (
    <svg width="664" height="500" viewBox="315.5 1650.5 664 500" fill="none" className="block shrink-0" aria-label="Drawing page">
      <rect x="348" y="1699" width="197" height="428" fill="#9ff186" />
      <path d="M372 1699v428M522 1699v428M372 1798h150M372 2029h150M348 1913h197M447 1798v231" stroke="#f4fff0" strokeWidth="2" />
      <path d="M542 1699h31M542 2127h34M573 1704v187M573 1937v189" stroke="#555" />
      <path d="M573 1702l2.500 6h-5zM573 2127l2.500-6h-5z" fill="#555" />
      <circle cx="542" cy="1699" r="4" fill="#e8201a" stroke="#9c0d0a" />
      <circle cx="542" cy="1699" r="1.2" fill="#500" />
      <circle cx="542" cy="2127" r="4" fill="#ffb52c" stroke="#b06a0e" />
      <circle cx="542" cy="2127" r="1.2" fill="#500" />
      <path d="M573 1695l4 4l-4 4l-4-4z" fill="#ffb52c" stroke="#b06a0e" />
      <text x="573" y="1914" dy="4" textAnchor="middle" transform="rotate(-90 573 1914)" fill="#222" className="font-['Open_Sans',sans-serif] text-[9px]">
        23.77 m
      </text>
      <rect x="527" y="1675" width="13" height="13" rx="1" fill="#eee" stroke="#777" />
      <path d="M532 1678v7l4-3.500z" fill="#222" />
    </svg>
  );
}

function LibTab({ label, active }: { label: string; active?: boolean }) {
  return (
    <div
      className={`flex h-[19px] items-center justify-between rounded-sm border px-1 ${
        active ? "border-[#d38d3a] bg-gradient-to-b from-[#fdd39b] via-[#f9a548] to-[#fdc37a]" : "border-[#8fbbe2] bg-gradient-to-b from-white to-[#d3e6fa]"
      }`}
    >
      <button className="flex-1 text-left font-['Liberation_Sans',Arial,sans-serif] text-[11px]">{label}</button>
      <button aria-label={`Close ${label}`} className={`flex size-3 items-center justify-center ${active ? "bg-[#2a4f7c]" : "bg-[#4d82b8]"}`}>
        <svg width="8" height="8" viewBox="0 0 8 8" stroke="#fff" strokeWidth="1.5" aria-hidden="true">
          <path d="M1 1l6 6M7 1l-6 6" />
        </svg>
      </button>
    </div>
  );
}

function HelpBadge() {
  return (
    <span className="flex size-[14px] shrink-0 items-center justify-center rounded-full border border-[#1a4d86] bg-gradient-to-b from-[#6fb0ea] to-[#1f65b0] text-[10px] leading-3 font-bold text-white">
      ?
    </span>
  );
}

function WinTitle() {
  return (
    <header className="-mx-[6px] shrink-0 bg-[linear-gradient(to_bottom,#5c8fbf,#24629e_20%,#2d6ca8_50%,#a3c2de_72%,#eef4fa)] px-[6px]">
      <div className="flex h-[30px] items-start">
        <div className="flex h-[30px] w-[210px] items-center gap-2 pl-1">
          <svg width="14" height="14" viewBox="0 0 14 14" aria-hidden="true"><path d="M1 1l12 12" stroke="#f4f4f4" strokeWidth="4" /><path d="M1 1l2 2M11 11l2 2" stroke="#d22" strokeWidth="4" /></svg>
          <span className="h-3 w-px bg-[#16406c]" />
          <button aria-label="New"><svg width="11" height="14" viewBox="0 0 11 14" aria-hidden="true"><path d="M0.500 0.500h7l3 3v10h-10z" fill="#f0f8ff" stroke="#8fb5da" /></svg></button>
          <button aria-label="Open"><svg width="12" height="14" viewBox="0 0 12 14" aria-hidden="true"><path d="M1 1h6v12h-6z" fill="#ffc65a" /><path d="M6 3l5 2v9l-5-2z" fill="#f09a22" /></svg></button>
          <button aria-label="Undo" className="text-[#3f8fd6]"><Undo2 size={15} strokeWidth={3} /></button>
          <button aria-label="Redo" className="text-[#8ba5bf]"><Redo2 size={15} strokeWidth={3} /></button>
          <button aria-label="Save"><svg width="12" height="14" viewBox="0 0 12 14" aria-hidden="true"><path d="M1 4h10v9h-10z" fill="#e8eef5" /><path d="M2 0h8v5h-8z" fill="#2a4f7c" /><path d="M3 8h6M3 10h6" stroke="#69a" /></svg></button>
          <button aria-label="Print preview"><svg width="15" height="14" viewBox="0 0 15 14" aria-hidden="true"><path d="M1 0.500h8l3 3v10h-11z" fill="#fff" stroke="#8fb5da" /><circle cx="7" cy="7" r="3" fill="#bcd9f2" stroke="#345" /><path d="M9 9l4 4" stroke="#345" strokeWidth="2" /></svg></button>
          <button aria-label="Page setup"><svg width="15" height="13" viewBox="0 0 15 13" aria-hidden="true"><path d="M0.500 0.500h14v12h-14z" fill="#f4f9ff" stroke="#8fb5da" /><path d="M2 3h11" stroke="#5b8fc4" strokeWidth="2" /><path d="M2 7h3M6 7h3M10 7h3M2 10h3M6 10h3M10 10h3" stroke="#5b8fc4" strokeWidth="1.5" /></svg></button>
          <Caret />
        </div>
        <h2 className="flex-1 pt-1 text-center text-xs leading-5 text-black [text-shadow:0_0_6px_#fff,0_0_10px_#fff,0_0_14px_#cfe4f8,0_0_14px_#cfe4f8]">
          ConceptDraw PRO - [My diagram - Page1]
        </h2>
        <div className="flex w-60 justify-end">
          <div className="flex h-[18px] overflow-hidden rounded-b border border-t-0 border-[#dbe9f6]">
            <button aria-label="Minimize window" className="flex w-7 items-center justify-center bg-gradient-to-b from-[#8ab0d4] to-[#4a7db0]"><i className="h-[3px] w-3 border border-[#345] bg-white" /></button>
            <button aria-label="Maximize window" className="flex w-[27px] items-center justify-center border-x border-[#c4d8ea] bg-gradient-to-b from-[#8ab0d4] to-[#4a7db0]"><i className="h-[9px] w-[11px] border-2 border-white bg-[#345]" /></button>
            <button aria-label="Close window" className="flex w-[46px] items-center justify-center bg-gradient-to-b from-[#e09a8e] to-[#b5281a]">
              <svg width="10" height="9" viewBox="0 0 10 9" stroke="#fff" strokeWidth="2.5" aria-hidden="true"><path d="M1 1l8 7M9 1l-8 7" /></svg>
            </button>
          </div>
        </div>
      </div>

      <nav className="flex h-[23px] items-end text-[#333]">
        <button className="ml-[2px] h-[23px] w-[54px] rounded-t border border-[#2a3f8a] bg-gradient-to-b from-[#5574c8] via-[#2b3fa0] to-[#3b66d8] text-white"><u>F</u>ile</button>
        <button className="ml-[6px] h-[23px] w-[55px] rounded-t border border-b-0 border-[#9aa7b5] bg-white">Home</button>
        <div className="ml-4 flex h-[23px] items-center gap-[29px]">
          {fileTabs.map((tab) => (
            <button key={tab} className="whitespace-nowrap">{tab}</button>
          ))}
        </div>
        <div className="ml-auto flex h-[22px] items-center gap-2 pr-2">
          <svg width="12" height="12" viewBox="0 0 12 12" aria-hidden="true"><path d="M0.500 0.500h11v11h-11z" fill="#fff" stroke="#1d5a9c" /><path d="M0 1.500h12M3.500 2v9M8.500 2v9" stroke="#1d5a9c" /></svg>
          <Caret />
          <HelpBadge />
          <Caret />
          <button aria-label="Collapse ribbon"><ChevronsUp size={12} /></button>
          <span className="flex items-center gap-2 text-[#9cc8f2]">
            <i className="mt-2 h-[2px] w-2 bg-[#9cc8f2]" />
            <Copy size={10} strokeWidth={3} />
            <svg width="8" height="8" viewBox="0 0 8 8" stroke="#9cc8f2" strokeWidth="2" aria-hidden="true"><path d="M0.500 0.500l7 7M7.500 0.500l-7 7" /></svg>
          </span>
        </div>
      </nav>
    </header>
  );
}

function Ribbon() {
  return (
    <div className="flex h-[89px] shrink-0 border-y border-[#8d949c] bg-gradient-to-b from-white to-[#eceff3]">
      <RibbonGroup label="Clipboard" width="w-[132px]">
        <div className="flex w-full gap-[5px] pl-3">
          <div className="flex w-[30px] flex-col">
            <button aria-label="Cut" className="flex h-[22px] items-center text-[#a5a5a5]"><Scissors size={15} className="-rotate-90" /></button>
            <button aria-label="Copy" className="flex h-[22px] items-center text-[#b5b5b5]"><Copy size={14} /></button>
            <button aria-label="Paste" className="flex h-[22px] items-center gap-1"><PasteGlyph /><Caret /></button>
          </div>
          <div className="flex flex-col">
            <RowButton off label="Duplicate" icon={<Glyph size={15}><g stroke="#aaa"><rect x="2" y="2" width="9" height="9" /><rect x="7" y="7" width="9" height="9" /></g></Glyph>} />
            <RowButton label="Clone Tool" icon={<Glyph size={15}><rect x="2" y="2" width="13" height="9" fill="#9ccbf2" /><path d="M8 6v10l3-3l2 4l1.500-1l-2-4h4z" fill="#fff" />{corners("green")}</Glyph>} />
            <RowButton label="Eyedropper" icon={<Pipette size={15} color="#2a5f9e" fill="#9cc3ea" />} />
          </div>
        </div>
      </RibbonGroup>
      <RibbonGroup width="w-[51px]">
        <BigButton label="Select" icon={<svg width="24" height="28" viewBox="0 0 24 28" aria-hidden="true"><path d="M3 2v19l5-5l5 9l4-2l-4-9h7z" fill="#f4faff" stroke="#3f74ab" /></svg>} />
      </RibbonGroup>
      <RibbonGroup label="Drawing Tools" width="w-[141px]">
        <div className="grid grid-cols-6 grid-rows-2 gap-x-1 pt-2 pb-1">
          {["Rectangle", "Ellipse", "Line", "Arc", "Curve", "Spline", "Text box", "Mirror", "Cut", "Edit curve", "Edit points", "Edit group"].map((name, i) => (
            <button key={name} aria-label={name} className={`flex items-center justify-center ${i > 6 ? "opacity-70 grayscale" : ""}`}>
              {name === "Rectangle" ? (
                <Glyph><rect x="2" y="4" width="14" height="11" fill="#fff" stroke="#2f6cae" /></Glyph>
              ) : name === "Ellipse" ? (
                <Glyph><ellipse cx="9" cy="9.5" rx="7" ry="5.5" fill="#fff" stroke="#2f6cae" /></Glyph>
              ) : (
                <Tool name={name} />
              )}
            </button>
          ))}
        </div>
      </RibbonGroup>
      <RibbonGroup label="Basic Shapes" width="w-[127px]">
        <div className="flex h-[60px] border border-[#bfc4ca]">
          <div className="grid w-[102px] grid-cols-5 items-center justify-items-center bg-white">
            {basicShapes.map((d) => (
              <svg key={d} width="15" height="15" viewBox="0 0 16 16" fill="#fff" stroke="#555" aria-hidden="true"><path d={d} /></svg>
            ))}
          </div>
          <div className="flex w-[15px] flex-col divide-y divide-[#bfc4ca] border-l border-[#bfc4ca]">
            <button aria-label="Previous shapes" className="flex flex-1 items-center justify-center opacity-40"><Caret up /></button>
            <button aria-label="Next shapes" className="flex flex-1 items-center justify-center"><Caret /></button>
            <button aria-label="All shapes" className="flex flex-1 flex-col items-center justify-center gap-[2px]"><i className="h-px w-2 bg-[#444]" /><Caret /></button>
          </div>
        </div>
      </RibbonGroup>
      <RibbonGroup label="Connectors" width="w-[186px]">
        <div className="flex w-full pl-[10px]">
          <BigButton menu={false} label="Direct" icon={<svg width="30" height="30" viewBox="0 0 30 30" aria-hidden="true"><path d="M5 25L24 6" stroke="#163f70" strokeWidth="2" /><path d="M1 21h8v8h-8zM21 1h8v8h-8z" fill="#a9daf8" stroke="#5c95cc" /></svg>} />
          <div className="ml-1 flex w-[76px] flex-col border-r border-[#cdd2d8] pl-1">
            <RowButton label="Smart" icon={<Glyph size={16}><path d="M4 12V4h9" /><Node x={1} y={12} /><Node x={12} y={2} /></Glyph>} />
            <RowButton label="Spline" icon={<Tool name="Spline connector" size={16} />} />
            <RowButton caret label="Round" icon={<Glyph size={16}><path d="M4 12Q3 4 12 4" stroke="#e08a1c" strokeDasharray="2 1" strokeWidth="2" /><Node x={2} y={12} /><Node x={12} y={2} /></Glyph>} />
          </div>
          <div className="flex flex-col pl-[5px]">
            <RowButton label="Chain" icon={<Glyph size={16} box={24}>{macIcons.Chain}</Glyph>} />
            <RowButton label="Tree" icon={<Glyph size={16} box={24}>{macIcons.Tree}</Glyph>} />
            <button aria-label="Remove connector" className="flex h-[22px] items-center gap-2">
              <Glyph size={17}><path d="M3 13h6v-8h4" stroke="#1c7c2c" /><Node x={1} y={11} s={3} c="green" /><Node x={13} y={3} s={4} c="green" /><path d="M6 10l6 6M12 10l-6 6" stroke="#c8201a" strokeWidth="2.5" /></Glyph>
              <Caret />
            </button>
          </div>
        </div>
      </RibbonGroup>
      <RibbonGroup label="Shape S..." launcher width="w-[75px]">
        <div className="flex w-full justify-between pr-2 pl-3">
          <BigButton label="Fill" icon={<svg width="26" height="28" viewBox="0 0 26 28" aria-hidden="true"><ellipse cx="13" cy="22" rx="12" ry="5" fill="#3f87d0" /><path d="M4 7v14q9 5 17 0v-14z" fill="#6d7a88" /><path d="M15 7v17" stroke="#dfe6ee" strokeWidth="4" /><ellipse cx="12.5" cy="7" rx="8.5" ry="4" fill="#58a5e8" stroke="#445" /></svg>} />
          <div className="flex flex-col">
            <button aria-label="Line colour" className="flex h-[22px] items-center"><Glyph size={16} box={16}><path d="M14 1L6 9" strokeWidth="2" /><path d="M7 8l-4 4l5-2z" fill="#2f6cae" /><path d="M2 14h13" stroke="#163f70" strokeWidth="2" /></Glyph></button>
            <button aria-label="Shadow" className="flex h-[22px] items-center"><Glyph size={16} box={16}><rect x="5" y="5" width="10" height="10" fill="#555" stroke="none" /><rect x="3" y="3" width="9" height="9" fill="#ffcf6a" stroke="#e08a1c" strokeWidth="2" /></Glyph></button>
            <button aria-label="Corner rounding" className="flex h-[22px] items-center"><Glyph size={16} box={16}><path d="M2 2h13M2 2v13" stroke="#e0a04a" strokeDasharray="2 1" /><path d="M3 15Q3 5 15 5" stroke="#b33" /></Glyph></button>
          </div>
        </div>
      </RibbonGroup>
      <RibbonGroup label="Text Format" launcher width="w-[216px]">
        <div className="flex w-full flex-col pl-[5px]">
          <div className="flex h-[22px] items-center">
            <div className="relative h-[22px] w-[115px]">
              <select aria-label="Font" className="h-full w-full appearance-none border border-[#c4c9cf] bg-white pl-1"><option>Calibri</option></select>
              <Caret className="pointer-events-none absolute top-[9px] right-1" />
            </div>
            <div className="relative h-[22px] w-[45px]">
              <select aria-label="Font size" className="h-full w-full appearance-none border border-[#c4c9cf] bg-white pl-1"><option>9</option></select>
              <Caret className="pointer-events-none absolute top-[9px] right-1" />
            </div>
          </div>
          <div className="flex h-[22px] items-center gap-[9px] pl-1 font-['Liberation_Serif',serif] font-bold text-[#1f5a9a]">
            <button aria-label="Grow font" className="flex text-base">A<Caret up className="mt-1" /></button>
            <button aria-label="Shrink font" className="flex text-sm">A<Caret className="mt-1" /></button>
            <button aria-label="Font colour" className="flex items-center gap-2 text-sm">A<Caret /></button>
            <button aria-label="Highlight" className="flex items-center gap-2"><span className="h-3 bg-[#1f5a9a] px-px font-['Open_Sans',sans-serif] text-[9px] leading-[11px] text-white">ab</span><Caret /></button>
            <button aria-label="Bold" className="text-base">B</button>
            <button aria-label="Italic" className="px-1 text-base italic">I</button>
            <button aria-label="Underline" className="text-base underline">U</button>
          </div>
          <div className="flex h-[22px] items-center font-['Liberation_Serif',serif] text-sm font-bold text-[#1f5a9a]">
            <button aria-label="Superscript" className="w-[22px]">A<sup className="text-[8px]">2</sup></button>
            <button aria-label="Subscript" className="w-[25px]">A<sub className="text-[8px]">2</sub></button>
            <div className="flex">
              <AlignGlyph name="Align left" lines="M3 4.500h9M3 6.500h5M3 8.500h9M3 10.500h5" />
              <AlignGlyph name="Align center" lines="M3 4.500h9M5 6.500h5M3 8.500h9M5 10.500h5" selected />
              <AlignGlyph name="Align right" lines="M3 4.500h9M7 6.500h5M3 8.500h9M7 10.500h5" />
            </div>
            <div className="ml-1 flex">
              <AlignGlyph name="Align top" lines="M3 3.500h9M5 5.500h5" />
              <AlignGlyph name="Align middle" lines="M3 5.500h9M5 7.500h5M3 9.500h9" selected />
              <AlignGlyph name="Align bottom" lines="M5 9.500h5M3 11.500h9" />
            </div>
            <button aria-label="Text box fit" className="ml-[5px]">
              <Glyph size={16} box={16}><rect x="4" y="2.5" width="8" height="11" fill="#e4effa" stroke="#2f6cae" /><path d="M6 5h4M6 7h4M6 9h4M6 11h4M8 0v2M8 14v2M0 8h3M13 8h3" /></Glyph>
            </button>
          </div>
        </div>
      </RibbonGroup>
      <RibbonGroup width="w-[51px]">
        <button className="flex h-[66px] flex-col items-center text-[11px]">
          <svg width="30" height="37" viewBox="0 0 30 37" aria-hidden="true">
            <rect x="1" y="6" width="16" height="16" rx="1" fill="#ffc23a" stroke="#d8921c" />
            <circle cx="14" cy="23" r="8" fill="#a88ce0" stroke="#6c4fb0" />
            <path d="M24 6h5v5h-5z" fill="#f2a03a" />
            <path d="M24 13h5v5h-5z" fill="#6b7fc4" />
            <path d="M24 20h5v5h-5z" fill="#d07c10" />
            <path d="M24 27h5v5h-5z" fill="#6a2a86" />
          </svg>
          <span className="leading-[13px]">Text</span>
          <span className="flex items-center gap-[3px] leading-[13px]">Style<Caret /></span>
        </button>
      </RibbonGroup>
    </div>
  );
}

function WinWindow() {
  const [zoom, setZoom] = useState(50);

  return (
    <section className="mt-[19px] flex h-[744px] w-full max-w-[1012px] flex-col overflow-hidden rounded-t-md border border-[#2c3a48] bg-gradient-to-r from-[#79bdec] via-[#4a9fd6] to-[#2468ac] px-[6px] pb-[6px] font-['Open_Sans',sans-serif] text-[11px] text-black">
      <WinTitle />
      <Ribbon />

      <div className="flex min-h-0 flex-1 bg-[#eceff4]">
        <aside className="ml-[6px] flex w-[264px] shrink-0 flex-col pt-[9px]">
          <div className="flex h-[23px] shrink-0 items-center justify-between bg-[#fde99a] px-[6px] text-[#333]">
            <h3>Libraries</h3>
            <svg width="10" height="10" viewBox="0 0 10 10" stroke="#333" fill="none" aria-hidden="true"><path d="M3 1h4v5M3 1v5M1 6h8M6 1v5M5 6v4" /></svg>
          </div>
          <div className="flex h-[30px] shrink-0 items-center px-[2px]">
            <input aria-label="Search libraries" className="h-5 min-w-0 flex-1 border border-[#777] bg-white px-1" />
            <button aria-label="Search" className="flex h-5 w-6 items-center justify-center border border-l-0 border-[#777] bg-[#f5f7f9] text-[#1d5a9c]"><Search size={13} strokeWidth={2.5} className="-scale-x-100" /></button>
            <button aria-label="Library tree" className="ml-[6px] flex h-5 w-10 items-center justify-center border border-[#777] bg-[#f5f7f9]"><TreeGlyph /></button>
          </div>
          <div className="flex shrink-0 flex-col gap-px px-px">
            <LibTab label="Sport Fields and Recreation" active />
            <LibTab label="Dimensioning" />
          </div>
          <div className="flex min-h-0 flex-1">
            <ul className="flex-1 overflow-hidden pt-[2px] pl-1">
              {libraryItems.map((name) => (
                <li key={name}>
                  <button className="flex h-[34px] w-full items-center gap-1 text-left">
                    <Thumb name={name} size={24} />
                    {name}
                  </button>
                </li>
              ))}
            </ul>
            <div className="mt-1 mr-[2px] mb-[10px] flex w-[15px] flex-col items-center bg-[#f1f2f4] py-[2px]">
              <Caret up />
              <div className="mt-[73px] flex h-[198px] w-full flex-col items-center justify-center gap-[2px] rounded-sm border border-[#8e959c] bg-gradient-to-r from-[#f7f7f7] to-[#ced2d8]">
                <i className="h-px w-[7px] bg-[#555]" />
                <i className="h-px w-[7px] bg-[#555]" />
                <i className="h-px w-[7px] bg-[#555]" />
              </div>
              <Caret className="mt-auto" />
            </div>
          </div>
        </aside>

        <div className="mr-[10px] ml-[9px] flex min-w-0 flex-1 flex-col pt-[13px]">
          <div className="flex h-[525px] flex-col border-t-2 border-l-2 border-[#777]">
            <div className="flex min-h-0 flex-1 bg-white">
              <div className="min-w-0 flex-1 overflow-hidden">
                <DocCanvas />
              </div>
              <div className="mr-[3px] flex w-4 flex-col items-center bg-[#f4f5f6] py-1">
                <Caret up className="mt-1" />
                <div className="mt-[44px] flex h-[292px] w-full flex-col items-center justify-center gap-px rounded-sm border border-[#8a95a3] bg-gradient-to-r from-[#f3f5f7] to-[#cfd5dc]">
                  <i className="h-px w-[7px] bg-[#777]" />
                  <i className="h-px w-[7px] bg-[#777]" />
                  <i className="h-px w-[7px] bg-[#777]" />
                  <i className="h-px w-[7px] bg-[#777]" />
                </div>
                <Caret className="mt-auto mb-1" />
              </div>
            </div>
            <div className="flex h-[21px] shrink-0 items-center bg-[#f2f3f5] pl-[18px]">
              <button aria-label="Previous page" className="h-[17px] w-[17px] rounded-sm border border-[#b9bdc2] bg-white leading-[14px] text-[#666]">&lt;</button>
              <div className="relative h-[17px] w-[164px]">
                <select aria-label="Page" className="h-full w-full appearance-none rounded-sm border border-[#777] bg-white pr-3 text-center leading-[14px] [text-align-last:center]">
                  <option>Page1 (1/1)</option>
                </select>
                <svg width="9" height="6" viewBox="0 0 9 6" className="pointer-events-none absolute top-[6px] right-[6px]" aria-hidden="true"><path d="M0 0h9L4.500 6z" /></svg>
              </div>
              <button aria-label="Next page" className="h-[17px] w-[17px] rounded-sm border border-[#b9bdc2] bg-white leading-[14px] text-[#666]">&gt;</button>
              <svg width="5" height="8" viewBox="0 0 5 8" className="ml-2" aria-hidden="true"><path d="M5 0v8L0 4z" fill="#444" /></svg>
              <div className="ml-[31px] flex h-[15px] w-[279px] items-center justify-center gap-px rounded-sm border border-[#8a95a3] bg-gradient-to-b from-[#f3f5f7] to-[#cfd5dc]">
                <i className="h-[7px] w-px bg-[#777]" />
                <i className="h-[7px] w-px bg-[#777]" />
                <i className="h-[7px] w-px bg-[#777]" />
                <i className="h-[7px] w-px bg-[#777]" />
              </div>
              <svg width="5" height="8" viewBox="0 0 5 8" className="mr-2 ml-auto" aria-hidden="true"><path d="M0 0v8L5 4z" fill="#444" /></svg>
              <button aria-label="Fit page" className="mr-1 flex size-[14px] items-center justify-center border border-[#b9bdc2] bg-white">
                <Glyph size={12} box={12}><rect x="4" y="3" width="4" height="6" fill="#fff" stroke="#888" /><path d="M1 4v-3h2M11 4v-3h-2M1 8v3h2M11 8v3h-2" stroke="#2f6cae" /></Glyph>
              </button>
            </div>
          </div>
          <div className="mt-[7px] flex h-4 items-stretch">
            <button aria-label="Fill colour" className="mr-[2px] flex w-8 items-center justify-center gap-1 border border-[#888] bg-white">
              <Glyph size={14} box={14}><path d="M2 7l5-5l5 4l-5 6q-5 1-5-5z" fill="#5c95cc" /><path d="M11 6q3 1 2 6" strokeWidth="2" /></Glyph>
              <span className="flex flex-col gap-px">
                <i className="size-[3px] bg-[#c22]" />
                <i className="size-[3px] bg-[#182]" />
                <i className="size-[3px] bg-[#26b]" />
              </span>
            </button>
            <div className="flex gap-px">
              {palette.map((color) => (
                <button key={color} aria-label={color} style={{ backgroundColor: color }} className="w-4 border border-black/25" />
              ))}
            </div>
          </div>
        </div>

        <aside className="flex w-[23px] shrink-0 flex-col items-center bg-[#e0e3e8] pt-[14px]">
          <div className="flex flex-col gap-3">
            <button aria-label="Pages"><Glyph size={16} box={16}><g fill="#eef6fd" stroke="#7fa9d4"><path d="M6 1h9v10h-9zM3.500 3h9v10h-9zM1 5h9v10h-9z" /></g></Glyph></button>
            <button aria-label="Layers"><Glyph size={16} box={16}><g stroke="none"><path d="M4 10h12l-4 4h-12z" fill="#3f8fd6" /><path d="M4 6h12l-4 5h-12z" fill="#2a9a3a" /><path d="M4 2h12l-4 5h-12z" fill="#f2a93a" /></g></Glyph></button>
            <button aria-label="Protection"><Glyph size={16} box={16}><rect x="2" y="2" width="12" height="12" fill="#a9d4f5" stroke="#5c95cc" /><rect x="5" y="7" width="6" height="6" fill="#555" stroke="none" /><path d="M6 7v-2q2-2 4 0v2" stroke="#555" /><path d="M1 1h2v2h-2zM13 1h2v2h-2zM1 13h2v2h-2zM13 13h2v2h-2z" fill="#3a3" stroke="#184" /></Glyph></button>
            <button aria-label="Format"><Glyph size={16} box={16}><path d="M15 1l-4 5" strokeWidth="3" stroke="#2f6cae" /><path d="M8 4l5 4l-2 3l-5-3z" fill="#888" stroke="none" /><path d="M6 8l5 4q-4 4-10 3q4-2 5-7z" fill="#e8a648" stroke="#a8742a" /></Glyph></button>
            <button aria-label="Dimensions"><Glyph size={16} box={16}><rect x="4.5" y="5" width="10" height="10" fill="#7cc0f2" stroke="#3f87d0" /><path d="M4.500 2h10M4.500 0.500v3M14.500 0.500v3M1.500 5v10M0 5h3M0 15h3" strokeWidth="0.9" /></Glyph></button>
          </div>
          <button className="mt-[6px] flex w-[21px] flex-col items-center gap-1 self-end rounded-l border border-r-0 border-[#a3a8ae] bg-white py-1 text-[#444]">
            <HelpBadge />
            <span className="text-xs leading-4 [writing-mode:vertical-rl]">Dynamic Help</span>
          </button>
        </aside>
      </div>

      <footer className="flex h-[22px] shrink-0 items-center border-t border-[#7d8287] bg-gradient-to-b from-[#f0f2f5] to-[#dcdfe4] text-[#444]">
        <span className="h-full w-[212px] border-r border-[#999] pl-1 leading-[22px]">Ready</span>
        <span className="w-[168px] pl-2 whitespace-nowrap">Mouse: [ 16.93, 39.69 ]</span>
        <span className="flex w-[272px] gap-[7px] pl-2 whitespace-nowrap">
          <span>Width: 13.49,</span>
          <span>Height: 14.00,</span>
          <span>Angle: 0°</span>
        </span>
        <span className="w-[72px] pl-2 whitespace-nowrap">ID: 256999</span>
        <button aria-label="Pan" className="text-[#5c8dc0]"><Hand size={15} fill="#eaf3fb" /></button>
        <button aria-label="Zoom to area" className="ml-[11px]"><Glyph size={16} box={16}><path d="M1 1h11v11h-11z" stroke="#3f74ab" strokeDasharray="2 1" /><circle cx="10" cy="10" r="3.5" fill="#e8f2fb" stroke="#777" /><path d="M12.500 12.500l3 3" stroke="#a8742a" strokeWidth="2" /></Glyph></button>
        <button aria-label="Fit page" className="ml-[10px]"><Glyph size={16} box={16}><rect x="1" y="1" width="14" height="14" stroke="#2f6cae" strokeDasharray="2 1" /><rect x="4.5" y="3.5" width="7" height="9" fill="#b9dcf8" stroke="#5c95cc" /><path d="M8 0v3M8 13v3M0 8h3M13 8h3" strokeWidth="2" /></Glyph></button>
        <button aria-label="Zoom out" className="ml-[6px]"><Glyph size={16} box={16}><circle cx="8" cy="8" r="7.5" fill="#f8f8f8" stroke="#777" /><path d="M4 8h8" stroke="#555" strokeWidth="2" /></Glyph></button>
        <input
          type="range"
          aria-label="Zoom"
          value={zoom}
          onChange={(e) => setZoom(Number(e.target.value))}
          className="h-px w-[94px] appearance-none bg-[#333] [&::-webkit-slider-thumb]:h-3 [&::-webkit-slider-thumb]:w-2 [&::-webkit-slider-thumb]:appearance-none [&::-webkit-slider-thumb]:rounded-b-full [&::-webkit-slider-thumb]:border [&::-webkit-slider-thumb]:border-[#777] [&::-webkit-slider-thumb]:bg-[#f8f8f8]"
        />
        <button aria-label="Zoom in"><Glyph size={16} box={16}><circle cx="8" cy="8" r="7.5" fill="#f8f8f8" stroke="#777" /><path d="M4 8h8M8 4v8" stroke="#555" strokeWidth="2" /></Glyph></button>
        <span className="ml-3">100%</span>
        <svg width="11" height="11" viewBox="0 0 11 11" fill="#aab" className="mt-[6px] ml-auto" aria-hidden="true">
          <path d="M8 0h2v2h-2zM4 4h2v2h-2zM8 4h2v2h-2zM0 8h2v2h-2zM4 8h2v2h-2zM8 8h2v2h-2z" />
        </svg>
      </footer>
    </section>
  );
}

export default function App() {
  return (
    <main className="bg-white pr-6 pb-3 pl-7">
      <div className="pl-[2px]">
        <ShapeSheet />
      </div>
      <MacWindow />
      <WinWindow />
    </main>
  );
}
